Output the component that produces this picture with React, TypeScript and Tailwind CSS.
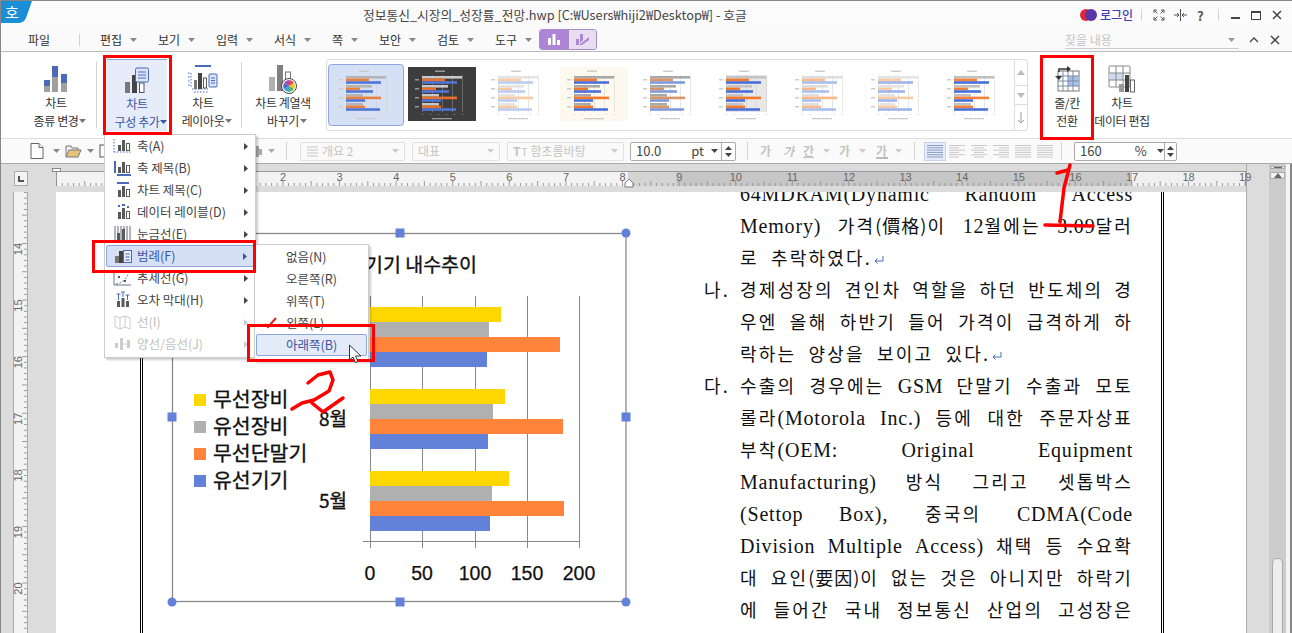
import { ReactNode } from 'react';

const BLUE = '#4a69b8';
const DARK = '#5a5a5a';

function Caret({ color = '#666' }: { color?: string }) {
    return (
        <svg width="7" height="4" viewBox="0 0 7 4" className="shrink-0">
            <path d="M0 0h7L3.5 4z" fill={color} />
        </svg>
    );
}

function Sep({ h = 'h-[18px]' }: { h?: string }) {
    return <div className={`w-px bg-[#d4d4d4] ${h}`} />;
}

// title bar ---------------------------------------------------------------
function TitleBar() {
    return (
        <div className="flex h-[29px] items-center border-t border-[#888] bg-[#fbfbfb]">
            <div className="relative h-[23px] w-[31px] self-start">
                <svg width="31" height="23" viewBox="0 0 31 23">
                    <path d="M0 0H31L25 17Q23 22 17 22H0z" fill="#1a8fd6" />
                </svg>
                <span className="absolute left-[4px] top-0 text-[15px] leading-[22px] text-white">호</span>
            </div>
            <span className="ml-[331px] whitespace-nowrap text-[12.75px] text-[#444]">정보통신_시장의_성장률_전망.hwp [C:₩Users₩hiji2₩Desktop₩] - 호글</span>
            <div className="ml-auto flex items-center pr-[10px]">
                <svg width="17" height="14" viewBox="0 0 17 14">
                    <circle cx="6" cy="7" r="6" fill="#e0263a" />
                    <circle cx="11" cy="7" r="6" fill="#5a35a8" />
                </svg>
                <span className="ml-[3px] text-[12px] font-medium text-[#3d3db5]">로그인</span>
                <div className="ml-[8px]"><Sep h="h-[12px]" /></div>
                <svg className="ml-[11px]" width="12" height="12" viewBox="0 0 12 12" fill="none" stroke="#555">
                    <path d="M1 4V1h3M8 1h3v3M11 8v3H8M4 11H1V8M1 1l3.5 3.5M11 1L7.500 4.500M11 11L7.500 7.500M1 11l3.500-3.500" />
                </svg>
                <svg className="ml-[9px]" width="13" height="12" viewBox="0 0 13 12" fill="none" stroke="#555">
                    <path d="M6.500 0v12M0 6h4M9 6h4M3 4l2 2-2 2M10 4L8 6l2 2" />
                </svg>
                <span className="ml-[10px] w-[9px] text-[13px] font-bold leading-none text-[#555]">?</span>
                <div className="ml-[12px]"><Sep h="h-[12px]" /></div>
                <div className="ml-[12px] mt-[6px] h-[2px] w-[9px] bg-[#444]" />
                <div className="ml-[11px] h-[9px] w-[10px] border border-t-2 border-[#444]" />
                <svg className="ml-[11px]" width="10" height="10" viewBox="0 0 10 10" stroke="#444" strokeWidth="1.500">
                    <path d="M1 1l8 8M9 1l-8 8" />
                </svg>
            </div>
        </div>
    );
}

// menu row ----------------------------------------------------------------
const MENU: [string, number][] = [['편집', 58], ['보기', 58], ['입력', 58], ['서식', 58], ['쪽', 47], ['보안', 58], ['검토', 58], ['도구', 44]];

function MenuBar() {
    return (
        <div className="flex h-[23px] items-center border-b border-[#bbb] bg-[#fafafa] text-[12px] text-[#333]">
            <span className="ml-[27px] w-[51px]">파일</span>
            <Sep h="h-[12px]" />
            <div className="ml-[20px] flex">
                {MENU.map(([label, w]) => (
                    <div key={label} className="flex items-center gap-[8px]" style={{ width: w }}>
                        <span>{label}</span>
                        <Caret color="#888" />
                    </div>
                ))}
            </div>
            <div className="-mt-[2px] flex h-[21px] w-[58px] overflow-hidden rounded-[3px] border border-[#a88cc8]">
                <div className="flex w-[28px] items-center justify-center bg-[#ad84d6]">
                    <svg width="14" height="13" viewBox="0 0 14 13" fill="#fff"><path d="M1 5h3v7H1zM5.500 1h3v11h-3zM10 7h3v5h-3z" /></svg>
                </div>
                <div className="flex flex-1 items-center justify-center border-l border-[#a88cc8] bg-[#e8dcf2]">
                    <svg width="15" height="13" viewBox="0 0 15 13" fill="#ad84d6"><path d="M1 6h3v6H1zM5 1h3v6l-3 3zM4 12L14 4v3L7 12z" /></svg>
                </div>
            </div>
            <div className="ml-auto flex items-center pr-[12px]">
                <div className="flex h-[17px] w-[174px] items-center justify-between border-b border-[#ccc] pr-[4px] text-[#c4c4c4]">
                    <span>찾을 내용</span>
                    <Caret color="#999" />
                </div>
                <svg className="ml-[10px]" width="10" height="6" viewBox="0 0 10 6" fill="none" stroke="#444" strokeWidth="1.300"><path d="M1 5l4-4 4 4" /></svg>
                <svg className="ml-[11px]" width="10" height="10" viewBox="0 0 10 10" stroke="#444" strokeWidth="1.500"><path d="M1 1l8 8M9 1l-8 8" /></svg>
            </div>
        </div>
    );
}

// ribbon ------------------------------------------------------------------
function RibbonBtn({ icon, lines, w, caret, active }: { icon: ReactNode; lines: string[]; w: string; caret?: boolean; active?: boolean }) {
    return (
        <div className={`flex h-[72px] shrink-0 flex-col items-center ${w} ${active ? 'border-t border-[#8fa5e0] bg-[#e6ecf9]' : ''}`}>
            <div className="mt-[4px] flex h-[31px] items-center justify-center">{icon}</div>
            <div className={`whitespace-nowrap text-center text-[12px] leading-[18px] tracking-[-0.4px] ${active ? 'text-[#3a55a5]' : 'text-[#333]'}`}>
                {lines.map((l, i) => (
                    <div key={l} className="flex items-center justify-center">
                        {l}
                        {caret && i === lines.length - 1 && <div className="-mr-[8px] ml-[1px]"><Caret color={active ? '#3a55a5' : '#777'} /></div>}
                    </div>
                ))}
            </div>
        </div>
    );
}

const IconType = (
    <svg width="26" height="28" viewBox="0 0 26 28">
        <path d="M1 15h6v6H1zM9 1h6v11H9zM18 9h6v9h-6z" fill={BLUE} />
        <path d="M1 21h6v6H1zM9 12h6v15H9zM18 18h6v9h-6z" fill="#a0a0a0" />
    </svg>
);
const IconAdd = (
    <svg width="26" height="26" viewBox="0 0 26 26">
        <path d="M1 15h5v11H1z" fill="#777" />
        <path d="M8 8h5v18H8z" fill="#444" />
        <rect x="15.500" y="16" width="4.500" height="9.500" fill="#fff" stroke="#555" />
        <rect x="11.500" y="1" width="13" height="14" rx="1.500" fill="#dbe5f7" stroke={BLUE} />
        <path d="M14 5h8M14 8h8M14 11h8" stroke={BLUE} />
    </svg>
);
const IconLayout = (
    <svg width="30" height="28" viewBox="0 0 30 28" fill="none">
        <path d="M7 1h16" stroke={BLUE} strokeWidth="2" />
        <path d="M3 8v15M0 8h2M0 12h2M0 16h2M0 20h2M4 24h16M6 27h14" stroke={BLUE} strokeDasharray="1.500 1.500" />
        <path d="M6 15h3v9H6z" fill="#777" />
        <path d="M10 8h4v16h-4z" fill="#444" />
        <rect x="15.500" y="13" width="3" height="10" fill="#fff" stroke="#555" />
        <rect x="21" y="9" width="8" height="13" rx="1" fill="#dbe5f7" stroke={BLUE} />
        <path d="M23 13h4M23 15.500h4M23 18h4" stroke={BLUE} />
    </svg>
);
const IconPalette = (
    <svg width="30" height="30" viewBox="0 0 30 30">
        <path d="M1 13h6v14H1z" fill="#b0b0b0" />
        <path d="M9 1h6v26H9z" fill="#808080" />
        <rect x="17.500" y="8" width="5" height="8" fill="#fff" stroke="#777" />
        <circle cx="21" cy="22" r="7.500" fill="#fff" stroke="#444" />
        <path d="M21 16a6 6 0 0 1 5 3l-5 3z" fill="#e8473a" />
        <path d="M26 19a6 6 0 0 1 0 6l-5-3z" fill="#f0c419" />
        <path d="M26 25a6 6 0 0 1-5 3v-6z" fill="#5ab552" />
        <path d="M21 28a6 6 0 0 1-5-3l5-3z" fill="#3aa6d8" />
        <path d="M16 25a6 6 0 0 1 0-6l5 3z" fill="#4a69b8" />
        <path d="M16 19a6 6 0 0 1 5-3v6z" fill="#a84ab8" />
    </svg>
);
const IconSwap = (
    <svg width="26" height="26" viewBox="0 0 26 26" fill="none">
        <rect x="4" y="5" width="21" height="20" fill="#fff" stroke="#777" />
        <path d="M14 10h11v10H14z" fill="#a9c0ea" />
        <path d="M4 10h21M4 15h21M4 20h21M9 5v20M14 5v20M19 5v20" stroke="#7a8aa8" />
        <path d="M5 6V3h9" stroke="#333" strokeWidth="1.500" />
        <path d="M13 0l4 3-4 3zM1 10l4 4 3-4z" fill="#333" />
    </svg>
);
const IconData = (
    <svg width="28" height="28" viewBox="0 0 28 28" fill="none">
        <rect x="1" y="1" width="21" height="21" rx="1" fill="#fff" stroke="#888" />
        <path d="M1 8h14v7H1z" fill="#cddcf3" />
        <path d="M1 8h21M1 15h21M8 1v21M15 1v21" stroke="#888" />
        <path d="M11 19h5v8h-5z" fill="#999" />
        <path d="M17 10h4v17h-4z" fill="#444" />
        <rect x="22.500" y="15" width="4" height="12" fill="#fff" stroke="#666" />
    </svg>
);

type Theme = { selected?: boolean; bg?: string; plot?: string; gray: string; orange: string; blue: string; dark?: boolean };

const THUMBS: Theme[] = [
    { selected: true, gray: '#b4b4b4', orange: '#e8813f', blue: '#4f76d9' },
    { bg: '#3d3d3d', gray: '#c8c8c8', orange: '#e8702a', blue: '#4f76d9', dark: true },
    { gray: '#e4e4e4', orange: '#f9cba4', blue: '#bccdf0' },
    { bg: '#fdf9ee', gray: '#a8a8a8', orange: '#f4782c', blue: '#4a6fd8' },
    { gray: '#a8a8a8', orange: '#d99468', blue: '#8099d8' },
    { plot: '#e8e8e8', gray: '#c4c4c4', orange: '#f4782c', blue: '#4a6fd8' },
    { gray: '#dedede', orange: '#f9b98a', blue: '#a9bfee' },
    { gray: '#e4e4e4', orange: '#f9cba4', blue: '#9db5ec' },
    { gray: '#c0c0c0', orange: '#f4823c', blue: '#4a6fd8' },
];

const THUMB_G = [40, 26, 17, 17];
const THUMB_O = [23, 14, 35, 19];
const THUMB_B = [35, 27, 19, 34];

function Thumb({ t }: { t: Theme }) {
    const ink = t.dark ? '#999' : '#ccc';
    return (
        <svg width="76" height="62" viewBox="0 0 76 62" className="shrink-0">
            {t.selected && <rect x="0.500" y="0.500" width="75" height="61" rx="3" fill="#d6e0f5" stroke="#8fa5e0" />}
            {t.bg && <rect x="4" y="3" width="68" height="54" fill={t.bg} />}
            <rect x="31" y="6.500" width="10" height="1.500" fill={ink} />
            {t.plot && <rect x="18" y="11" width="41" height="37" fill={t.plot} />}
            {[0, 1, 2, 3, 4].map(i => <rect key={i} x={18 + i * 10} y="11" width="0.500" height="37" fill={ink} />)}
            {THUMB_G.map((g, i) => (
                <g key={i}>
                    <rect x="11" y={15 + i * 9} width="4" height="1.500" fill={ink} />
                    <rect x="18" y={12 + i * 9} width={g} height="2.600" fill={t.gray} />
                    <rect x="18" y={14.600 + i * 9} width={THUMB_O[i]} height="2.600" fill={t.orange} />
                    <rect x="18" y={17.200 + i * 9} width={THUMB_B[i]} height="2.600" fill={t.blue} />
                </g>
            ))}
            {[0, 1, 2, 3, 4, 5].map(i => <rect key={i} x={18 + i * 8} y="50" width="1" height="1" fill={ink} />)}
            <rect x="28" y="54" width="20" height="1.300" fill={ink} />
        </svg>
    );
}

function Ribbon() {
    return (
        <div className="flex h-[86px] items-center bg-white">
            <div className="ml-[25px]"><RibbonBtn icon={IconType} lines={['차트', '종류 변경']} w="w-[60px]" caret /></div>
            <div className="ml-[10px]"><Sep h="h-[66px]" /></div>
            <div className="ml-[10px]"><RibbonBtn icon={IconAdd} lines={['차트', '구성 추가']} w="w-[60px]" caret active /></div>
            <div className="ml-[6px]"><RibbonBtn icon={IconLayout} lines={['차트', '레이아웃']} w="w-[60px]" caret /></div>
            <div className="ml-[8px]"><Sep h="h-[66px]" /></div>
            <div className="ml-[5px]"><RibbonBtn icon={IconPalette} lines={['차트 계열색', '바꾸기']} w="w-[72px]" caret /></div>
            <div className="ml-[7px] flex h-[72px] w-[702px] items-center rounded-[3px] border border-[#ddd] pl-[1px]">
                {THUMBS.map((t, i) => <Thumb key={i} t={t} />)}
                <div className="ml-[2px] flex h-full w-[14px] flex-col border-l border-[#ddd] text-[#aaa]">
                    <div className="flex h-[25px] items-center justify-center"><svg width="8" height="5" viewBox="0 0 8 5"><path d="M4 0l4 5H0z" fill="#bbb" /></svg></div>
                    <div className="flex h-[20px] items-center justify-center border-y border-[#ddd]"><svg width="8" height="5" viewBox="0 0 8 5"><path d="M0 0h8L4 5z" fill="#bbb" /></svg></div>
                    <div className="flex flex-1 items-center justify-center"><svg width="8" height="12" viewBox="0 0 8 12" fill="none" stroke="#999"><path d="M4 0v11M1 8l3 3 3-3" /></svg></div>
                </div>
            </div>
            <div className="ml-[12px]"><RibbonBtn icon={IconSwap} lines={['줄/칸', '전환']} w="w-[54px]" /></div>
            <RibbonBtn icon={IconData} lines={['차트', '데이터 편집']} w="w-[56px]" />
        </div>
    );
}

// toolbar -----------------------------------------------------------------
function FieldBox({ w, children, disabled }: { w: string; children: ReactNode; disabled?: boolean }) {
    return (
        <div className={`flex h-[19px] items-center rounded-[2px] border ${disabled ? 'border-[#e2e2e2] text-[#c4c4c4]' : 'border-[#aaa] bg-white text-[#444]'} px-[5px] text-[12px] ${w}`}>
            {children}
        </div>
    );
}

function Spin() {
    return (
        <div className="ml-auto -mr-[5px] flex h-full w-[14px] flex-col items-center justify-center gap-[3px] border-l border-[#aaa]">
            <svg width="7" height="4" viewBox="0 0 7 4"><path d="M3.500 0L7 4H0z" fill="#444" /></svg>
            <svg width="7" height="4" viewBox="0 0 7 4"><path d="M0 0h7L3.500 4z" fill="#444" /></svg>
        </div>
    );
}

const ALIGNS: [number, number][][] = [
    [[0, 16], [0, 16], [0, 16], [0, 16], [0, 16], [0, 16]],
    [[0, 16], [0, 10], [0, 16], [0, 10], [0, 16], [0, 10]],
    [[0, 16], [3, 13], [0, 16], [3, 13], [0, 16], [3, 13]],
    [[0, 16], [6, 16], [0, 16], [6, 16], [0, 16], [6, 16]],
    [[0, 16], [0, 16], [0, 16], [0, 16], [0, 16], [0, 16]],
    [[0, 16], [0, 16], [0, 16], [0, 16], [0, 16], [0, 16]],
];

function Toolbar() {
    return (
        <div className="flex h-[25px] items-center border-t border-[#ddd] bg-[#fafafa]">
            <svg className="ml-[29px]" width="14" height="16" viewBox="0 0 14 16" fill="#fff" stroke="#666"><path d="M1 .5h8l4 4v11H1z" /><path d="M9 .5v4h4" /></svg>
            <div className="ml-[9px]"><Caret color="#888" /></div>
            <svg className="ml-[5px]" width="17" height="14" viewBox="0 0 17 14" stroke="#777"><path d="M1 13V2h5l1 2h6v2" fill="#f2f2f2" /><path d="M1 13l3-7h12l-3 7z" fill="#e4c47c" /></svg>
            <div className="ml-[5px]"><Caret color="#888" /></div>
            <svg className="ml-[5px]" width="12" height="14" viewBox="0 0 12 14" fill="#fff" stroke="#555"><rect x="1" y="1" width="10" height="12" /></svg>
            <svg className="ml-[138px]" width="13" height="11" viewBox="0 0 13 11" fill="#aaa"><path d="M3 0h7v3h3v6h-3v2H3V9H0V3h3z" /></svg>
            <div className="ml-[6px]"><Caret color="#aaa" /></div>
            <div className="ml-[11px]"><Sep /></div>
            <div className="ml-[13px]">
                <FieldBox w="w-[105px]" disabled>
                    <svg width="13" height="13" viewBox="0 0 13 13" stroke="#c4c4c4"><path d="M1 2h11M1 5h11M1 8h11M1 11h11" /></svg>
                    <span className="ml-[3px]">개요 2</span>
                    <div className="ml-auto"><Caret color="#ccc" /></div>
                </FieldBox>
            </div>
            <div className="ml-[7px]">
                <FieldBox w="w-[88px]" disabled><span>대표</span><div className="ml-auto"><Caret color="#ccc" /></div></FieldBox>
            </div>
            <div className="ml-[7px]">
                <FieldBox w="w-[117px]" disabled>
                    <span className="font-bold">T</span><span className="ml-[1px] text-[10px]">T</span>
                    <span className="ml-[3px]">함초롬바탕</span>
                    <div className="ml-auto"><Caret color="#ccc" /></div>
                </FieldBox>
            </div>
            <div className="ml-[6px]">
                <FieldBox w="w-[106px]">
                    <span className="text-[13px]">10.0</span>
                    <span className="ml-[30px] text-[13px]">pt</span>
                    <div className="ml-[7px]"><Caret color="#444" /></div>
                    <Spin />
                </FieldBox>
            </div>
            <div className="ml-[11px]"><Sep /></div>
            <div className="ml-[12px] flex items-center text-[12px] font-bold text-[#c4c4c4]">
                <span className="w-[12px]">가</span>
                <span className="ml-[11px] w-[12px] italic">가</span>
                <span className="ml-[8px] w-[12px] underline">간</span>
                <div className="ml-[8px]"><Caret color="#ccc" /></div>
                <span className="ml-[9px] w-[12px]">가</span>
                <div className="ml-[8px]"><Caret color="#ccc" /></div>
                <span className="ml-[10px] w-[12px] border-b-2 border-[#bbb] leading-[13px]">가</span>
                <div className="ml-[7px]"><Caret color="#ccc" /></div>
            </div>
            <div className="ml-[12px]"><Sep /></div>
            <div className="ml-[9px] flex items-center">
                {ALIGNS.map((lines, i) => (
                    <div key={i} className={`flex h-[19px] w-[22px] items-center justify-center ${i === 0 ? 'border border-[#c8d4ee] bg-[#e6ecf9]' : ''}`}>
                        <svg width="16" height="13" viewBox="0 0 16 13" stroke={i === 0 ? '#8a9ac0' : '#c8c8c8'}>
                            {lines.map(([a, b], j) => <path key={j} d={`M${a} ${j * 2.300 + 0.500}H${b}`} />)}
                        </svg>
                    </div>
                ))}
            </div>
            <div className="ml-[5px]"><Sep /></div>
            <div className="ml-[12px]">
                <FieldBox w="w-[103px]">
                    <span className="text-[13px]">160</span>
                    <span className="ml-[33px] text-[13px]">%</span>
                    <div className="ml-[10px]"><Caret color="#444" /></div>
                    <Spin />
                </FieldBox>
            </div>
        </div>
    );
}

// rulers ------------------------------------------------------------------
const UNIT = 56.6;

function TopRuler() {
    const ticks = Array.from({ length: 211 }, (_, i) => i);
    return (
        <svg width="1191" height="24" viewBox="56 165 1191 24" className="block overflow-visible font-['Liberation_Sans',sans-serif]">
            <rect x="56" y="171" width="572" height="15" fill="#f3f3f3" />
            <rect x="628" y="171" width="48" height="15" fill="#d4d4d4" />
            <rect x="676" y="171" width="456" height="15" fill="#c6c6c6" />
            <rect x="1132" y="171" width="114" height="15" fill="#f0f0f0" />
            <path d="M56 171.500H1246M56.500 171V186M1245.500 171V186" stroke="#999" />
            {ticks.map(i => {
                const x = 56.500 + i * UNIT / 10 * 1;
                return <path key={i} d={`M${x} ${i % 5 === 0 ? 181 : 183}V186`} stroke="#888" strokeWidth="0.800" />;
            })}
            {Array.from({ length: 18 }, (_, i) => (
                <text key={i} x={283 + i * UNIT} y="181" fontSize="11" textAnchor="middle" fill="#666">{i + 2}</text>
            ))}
            <rect x="52.500" y="168.500" width="8" height="3" fill="#fff" stroke="#888" />
            <path d="M629 179l4 4v4h-8v-4z" fill="#fff" stroke="#777" />
        </svg>
    );
}

function LeftRuler() {
    return (
        <svg width="15" height="441" viewBox="13 192 15 441" className="block font-['Liberation_Sans',sans-serif]">
            <rect x="13" y="192" width="15" height="441" fill="#f3f3f3" />
            <path d="M13.500 192V633M27.500 192V633" stroke="#aaa" />
            {Array.from({ length: 80 }, (_, i) => {
                const y = 192.500 + i * UNIT / 10;
                return <path key={i} d={`M${(i + 1) % 5 === 0 ? 22 : 24} ${y}H27`} stroke="#888" strokeWidth="0.800" />;
            })}
            {[14, 15, 16, 17, 18, 19, 20].map((n, i) => (
                <text key={n} x="0" y="0" fontSize="11" textAnchor="middle" fill="#666" transform={`translate(22 ${249 + i * UNIT}) rotate(-90)`}>{n}</text>
            ))}
        </svg>
    );
}

// chart -------------------------------------------------------------------
const GROUPS = [
    { y: 307, v: [501, 489, 560, 487] },
    { y: 389, v: [505, 493, 563, 488] },
    { y: 471, v: [509, 492, 564, 490] },
];
const SERIES = ['#ffd700', '#b0b0b0', '#ff833a', '#6381d9'];
const LEGEND = ['무선장비', '유선장비', '무선단말기', '유선기기'];
const GRID = [370, 422, 475, 527, 579];

function Handle({ x, y, round }: { x: number; y: number; round?: boolean }) {
    return round
        ? <circle cx={x} cy={y} r="4.500" fill="#6381d9" />
        : <rect x={x - 4.500} y={y - 4.500} width="9" height="9" fill="#6381d9" />;
}

function Chart() {
    return (
        <svg width="468" height="382" viewBox="165 227 468 382" className="ml-[22px] mt-[35px] shrink-0">
            <rect x="172.500" y="233.500" width="453.500" height="368" fill="#fff" stroke="#8a8a8a" strokeWidth="1.300" />
            <text x="477" y="272" fontSize="19.500" textAnchor="end" fill="#111" stroke="#111" strokeWidth="0.350">정보통신기기 내수추이</text>
            {GRID.map(x => <path key={x} d={`M${x + 0.500} 296V548`} stroke="#888" />)}
            <path d="M363 541.500H579" stroke="#888" />
            {GROUPS.map(g => g.v.map((end, i) => (
                <rect key={i} x="370" y={g.y + i * 15} width={end - 370} height="15" fill={SERIES[i]} />
            )))}
            {GRID.map((x, i) => (
                <text key={x} x={x} y="580" fontSize="19.500" textAnchor="middle" fill="#111" stroke="#111" strokeWidth="0.250" className="font-['Liberation_Sans',sans-serif]">{i * 50}</text>
            ))}
            <text x="347" y="426" fontSize="19" textAnchor="end" fill="#111" stroke="#111" strokeWidth="0.350">8월</text>
            <text x="347" y="508" fontSize="19" textAnchor="end" fill="#111" stroke="#111" strokeWidth="0.350">5월</text>
            {LEGEND.map((l, i) => (
                <g key={l}>
                    <rect x="194" y={394 + i * 27} width="12" height="12" fill={SERIES[i]} />
                    <text x="213" y={407 + i * 27} fontSize="20.500" fill="#111" stroke="#111" strokeWidth="0.350">{l}</text>
                </g>
            ))}
            <Handle x={400} y={233} />
            <Handle x={626} y={233} round />
            <Handle x={172} y={417} />
            <Handle x={626} y={417} />
            <Handle x={172} y={602} round />
            <Handle x={400} y={602} />
            <Handle x={626} y={602} round />
        </svg>
    );
}

// body text ---------------------------------------------------------------
type Line = { mark?: string; text: string; last?: boolean };

const LINES: Line[] = [
    { text: '64MDRAM(Dynamic Random Access' },
    { text: 'Memory) 가격(價格)이 12월에는 3.09달러' },
    { text: '로 추락하였다.', last: true },
    { mark: '나.', text: '경제성장의 견인차 역할을 하던 반도체의 경' },
    { text: '우엔 올해 하반기 들어 가격이 급격하게 하' },
    { text: '락하는 양상을 보이고 있다.', last: true },
    { mark: '다.', text: '수출의 경우에는 GSM 단말기 수출과 모토' },
    { text: '롤라(Motorola Inc.) 등에 대한 주문자상표' },
    { text: '부착(OEM: Original Equipment' },
    { text: 'Manufacturing) 방식 그리고 셋톱박스' },
    { text: '(Settop Box), 중국의 CDMA(Code' },
    { text: 'Division Multiple Access) 채택 등 수요확' },
    { text: '대 요인(要因)이 없는 것은 아니지만 하락기' },
    { text: '에 들어간 국내 정보통신 산업의 고성장은' },
];

function Runs({ text }: { text: string }) {
    // latin runs are set larger; hanja goes inline-block or justify spreads it
    return (
        <>
            {text.split(/(\([\u4e00-\u9fff]+\)|[A-Za-z0-9.:()]*[A-Za-z0-9][A-Za-z0-9.:()]*)/).map((run, i) => {
                if (i % 2 === 0) return <span key={i}>{run}</span>;
                return /[\u4e00-\u9fff]/.test(run)
                    ? <span key={i} className="inline-block tracking-[1px]">{run}</span>
                    : <span key={i} className="font-['Liberation_Serif',serif] text-[20px] tracking-[0.8px]">{run}</span>;
            })}
        </>
    );
}

function BodyText() {
    return (
        <div className="-mt-[15px] ml-[71px] w-[429px] shrink-0 text-[18px] leading-[32px] tracking-[2.2px] text-[#111]">
            {LINES.map((l, i) => (
                <div key={i} className="flex h-[32px]">
                    <span className="w-[36px] shrink-0">{l.mark}</span>
                    <div className={`flex-1 whitespace-nowrap ${l.last ? '[word-spacing:6px]' : '[text-align-last:justify]'}`}>
                        <Runs text={l.text} />
                        {l.last && (
                            <svg className="ml-[2px] inline-block" width="10" height="10" viewBox="0 0 10 10" fill="none" stroke="#4a69b8">
                                <path d="M9 1v5H1M3.500 3.500L1 6l2.500 2.500" />
                            </svg>
                        )}
                    </div>
                </div>
            ))}
        </div>
    );
}

// popups ------------------------------------------------------------------
const MENU_ICONS: ReactNode[] = [
    <><path d="M1 2v13M1 15h17" stroke={BLUE} strokeDasharray="1.500 1.500" fill="none" /><path d="M5 8h3v6H5zM9 3h3v11H9z" fill={DARK} /><rect x="13.500" y="6.500" width="3" height="7" fill="#fff" stroke={DARK} /></>,
    <><path d="M1 2h2v12H1zM4 15h14v2H4z" fill={BLUE} /><path d="M5 8h3v6H5zM9 3h3v11H9z" fill={DARK} /><rect x="13.500" y="6.500" width="3" height="7" fill="#fff" stroke={DARK} /></>,
    <><path d="M4 1h12v2H4z" fill={BLUE} /><path d="M5 9h3v7H5zM9 5h3v11H9z" fill={DARK} /><rect x="13.500" y="8.500" width="3" height="7" fill="#fff" stroke={DARK} /></>,
    <><path d="M5 2h2v2H5zM9 1h3v2H9zM14 3h2v2h-2z" fill={BLUE} /><path d="M5 9h3v7H5zM9 5h3v11H9z" fill={DARK} /><rect x="13.500" y="8.500" width="3" height="7" fill="#fff" stroke={DARK} /></>,
    <><path d="M2 1v15M5 1v15M8 1v15M11 1v15M14 1v15M17 1v15" stroke="#667" fill="none" /><path d="M4 8h3v8H4zM9 4h3v12H9z" fill={DARK} /></>,
    <><path d="M2 9h4v7H2z" fill="#777" /><path d="M6 4h4v12H6z" fill="#444" /><rect x="10.500" y="3.500" width="8" height="12" fill="#e6ecf9" stroke={BLUE} /><path d="M12.500 7h4M12.500 10h4M12.500 13h4" stroke={BLUE} /></>,
    <><path d="M1 2v14h17" stroke="#777" fill="none" /><path d="M3 15Q12 14 16 3" stroke={BLUE} strokeDasharray="2 1.500" fill="none" /><path d="M5 7h2v2H5zM11 11h2v2h-2z" fill="#555" /></>,
    <><path d="M4 10h3v6H4zM8.500 7h3v9h-3zM13 10h3v6h-3z" fill={DARK} /><path d="M5.500 3v6M3.500 3h4M10 1v5M8 1h4M14.500 4v5M12.500 4h4" stroke={BLUE} fill="none" /></>,
    <path d="M2 3l5 2 5-2 5 2v11l-5-2-5 2-5-2zM7 5v11M12 3v11" stroke="#ccc" fill="none" />,
    <><path d="M2 8h3v5H2zM7 3h3v12H7zM14 5h3v8h-3z" fill="#ccc" /><path d="M10 9h4" stroke="#ccc" /></>,
];

const MAIN_ITEMS = ['축(A)', '축 제목(B)', '차트 제목(C)', '데이터 레이블(D)', '눈금선(E)', '범례(F)', '추세선(G)', '오차 막대(H)', '선(I)', '양선/음선(J)'];
const SUB_ITEMS = ['없음(N)', '오른쪽(R)', '위쪽(T)', '왼쪽(L)', '아래쪽(B)'];

function Popups() {
    return (
        <>
            <div className="absolute left-[103px] top-[134px] z-30 h-[224px] w-[152px] border border-[#ccc] bg-white text-[12.5px] text-[#444] shadow-[2px_2px_2px_rgba(0,0,0,0.2)]">
                {MAIN_ITEMS.map((label, i) => {
                    const active = i === 5;
                    const off = i >= 8;
                    return (
                        <div key={label} className={`mx-[1px] flex h-[22px] items-center rounded-[2px] ${active ? 'border border-[#8fa5e0] bg-[#d6e0f5] text-[#3a55a5]' : ''} ${off ? 'text-[#c0c0c0]' : ''}`}>
                            <svg className={active ? 'ml-[6px]' : 'ml-[7px]'} width="20" height="18" viewBox="0 0 20 18">{MENU_ICONS[i]}</svg>
                            <span className="ml-[4px] whitespace-nowrap">{label}</span>
                            <svg className="ml-auto mr-[6px]" width="4" height="7" viewBox="0 0 4 7"><path d="M0 0l4 3.500L0 7z" fill={off ? '#ccc' : active ? '#3a55a5' : '#444'} /></svg>
                        </div>
                    );
                })}
            </div>
            <div className="absolute left-[253px] top-[244px] z-40 h-[117px] w-[115px] border border-[#ccc] bg-white pt-[1px] text-[12.5px] text-[#444] shadow-[2px_2px_2px_rgba(0,0,0,0.2)]">
                {SUB_ITEMS.map((label, i) => (
                    <div key={label} className={`mx-[1px] flex h-[22px] items-center rounded-[2px] ${i === 4 ? 'border border-[#8fa5e0] bg-[#e4ebf8] pl-[29px] text-[#3a55a5]' : 'pl-[30px]'}`}>
                        {label}
                    </div>
                ))}
                <svg className="absolute left-[9px] top-[72px]" width="13" height="12" viewBox="0 0 13 12" fill="none" stroke="#e0202a" strokeWidth="2"><path d="M1 7l3 3 8-9" /></svg>
            </div>
        </>
    );
}

function RedBox({ className }: { className: string }) {
    return <div className={`absolute z-50 border-[3px] border-[#f00] ${className}`} />;
}

function Overlays() {
    return (
        <>
            <RedBox className="left-[102px] top-[55px] h-[80px] w-[69px]" />
            <RedBox className="left-[1039px] top-[55px] h-[85px] w-[54px]" />
            <RedBox className="left-[91px] top-[240px] h-[33px] w-[164px]" />
            <RedBox className="left-[246px] top-[324px] h-[38px] w-[128px]" />
            <svg className="absolute -left-px top-0 z-50" width="1292" height="633" viewBox="0 0 1292 633" fill="none" stroke="#f00" strokeWidth="3.500" strokeLinecap="round" strokeLinejoin="round">
                <path d="M1057 173L1068 170" />
                <path d="M1070 165L1064 188L1060 222" />
                <path d="M1045 225L1093 226" />
                <path d="M308 383L318 375L330 372L333 380L329 391L314 400L302 403L292 409" />
                <path d="M312 403L323 412L333 405L343 398" />
                <path d="M349.500 345.500V360l3.500-3 2.500 5.500 2.500-1-2.500-5.500h5z" fill="#fff" stroke="#333" strokeWidth="1" />
            </svg>
        </>
    );
}

export default function App() {
    return (
        <div className="relative flex h-[633px] w-[1292px] flex-col overflow-hidden border-l border-[#888] bg-white font-['Noto_Sans_CJK_KR','Liberation_Sans',sans-serif]">
            <TitleBar />
            <MenuBar />
            <Ribbon />
            <Toolbar />
            <div className="flex min-h-0 flex-1 border-t border-[#aaa] bg-[#dcdcdc]">
                <div className="flex w-[55px] shrink-0 flex-col pl-[12px]">
                    <div className="ml-[1px] mt-[7px] flex h-[15px] w-[14px] items-end border border-[#aaa] bg-[#f3f3f3] p-[3px]">
                        <div className="h-[6px] w-[7px] border-b-2 border-l-2 border-[#555]" />
                    </div>
                    <div className="mt-[6px]"><LeftRuler /></div>
                </div>
                <div className="flex w-[1191px] shrink-0 flex-col border-r border-[#aaa]">
                    <div className="h-[28px] shrink-0 pt-[1px]"><TopRuler /></div>
                    <div className="min-h-0 flex-1 overflow-hidden bg-white">
                        <div className="ml-[84px] flex h-full w-[1024px] border-x-[3px] border-double border-black">
                            <Chart />
                            <BodyText />
                        </div>
                    </div>
                </div>
                <div className="flex flex-1">
                    <div className="w-[22px]" />
                    <div className="flex w-[17px] flex-col items-center bg-[#cccccc] pt-[2px]">
                        <div className="flex h-[9px] w-[15px] items-center justify-center border border-[#aaa] bg-[#f3f3f3]"><div className="h-[1px] w-[8px] bg-[#666]" /></div>
                        <div className="mt-[3px] flex h-[16px] w-[15px] items-center justify-center border border-[#aaa] bg-[#f3f3f3]">
                            <svg width="8" height="5" viewBox="0 0 8 5"><path d="M4 0l4 5H0z" fill="#666" /></svg>
                        </div>
                        <div className="mt-[379px] h-[80px] w-[11px] shrink-0 rounded-t-[5px] border border-[#aaa] bg-[#eeeeee]" />
                    </div>
                    <div className="flex-1 border-r-2 border-[#888] bg-[#f4f4f4]" />
                </div>
            </div>
            <Popups />
            <Overlays />
        </div>
    );
}
